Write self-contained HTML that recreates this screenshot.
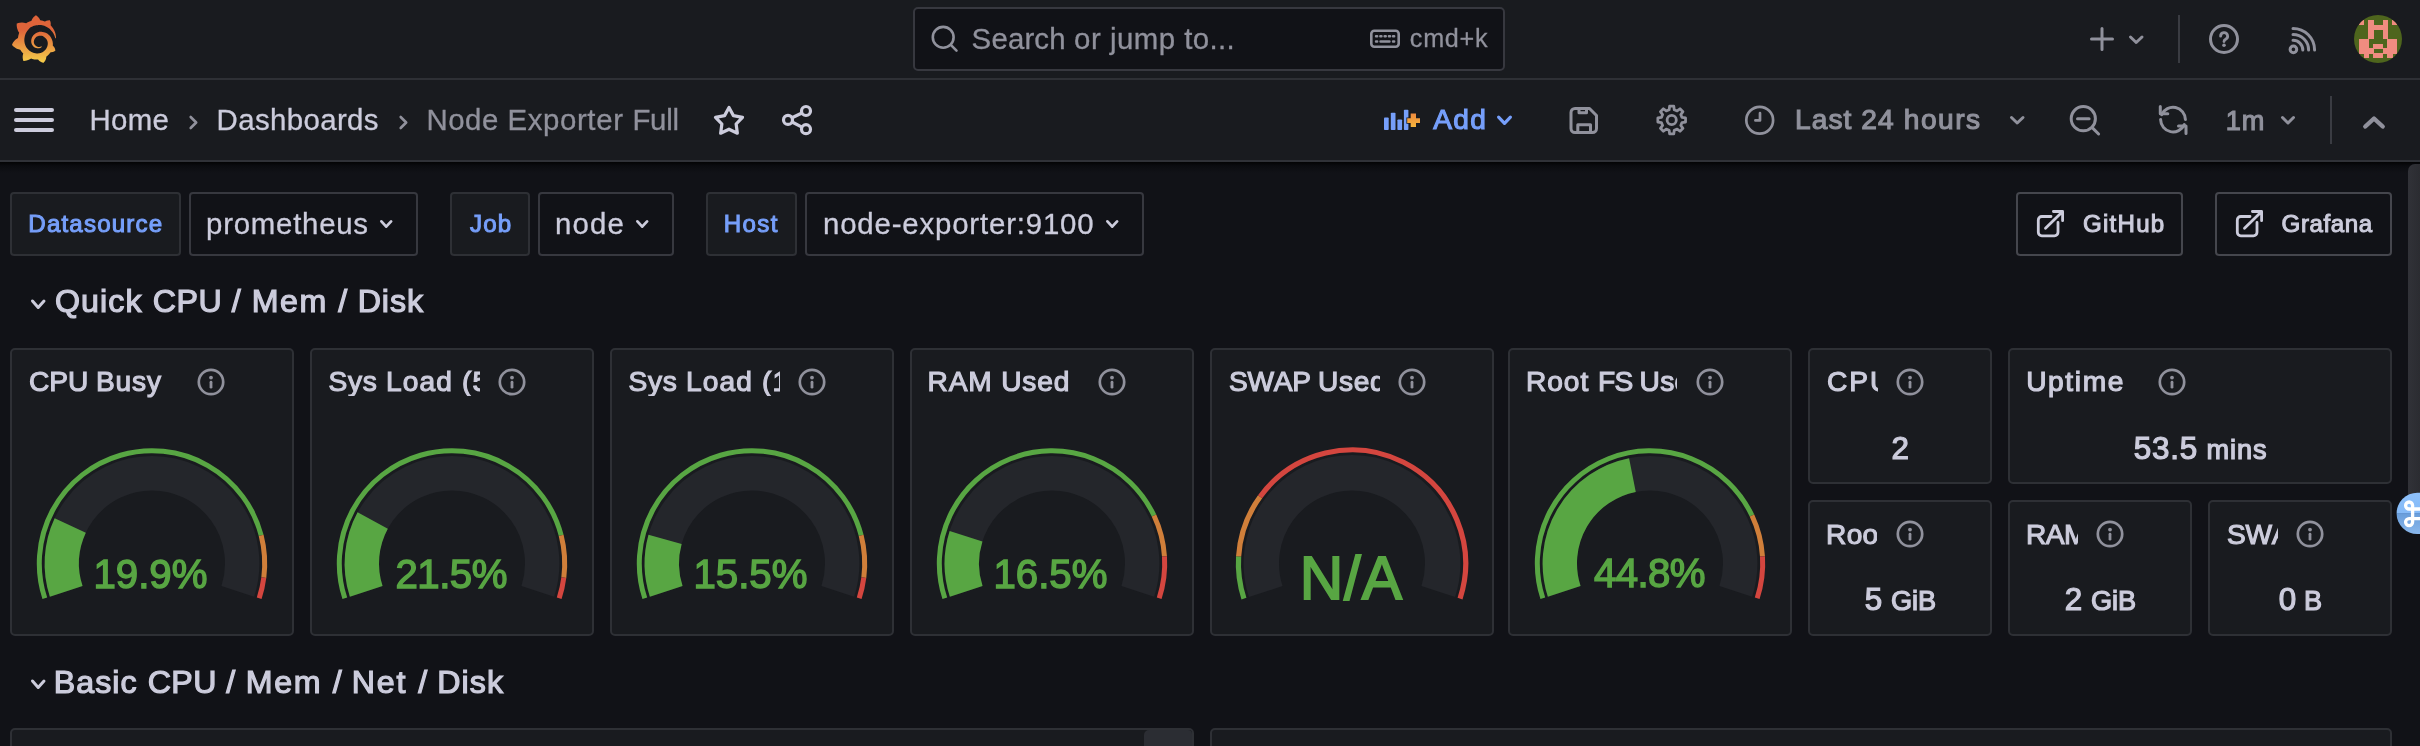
<!DOCTYPE html><html lang="en"><head><meta charset="utf-8"><title>Node Exporter Full - Dashboards - Grafana</title><style>
html,body{margin:0;padding:0;background:#111217;}
body{width:2420px;height:746px;overflow:hidden;background:#111217;font-family:"Liberation Sans", sans-serif;position:relative;}
.b{position:absolute;box-sizing:border-box;}
.t{position:absolute;white-space:pre;line-height:1;font-kerning:none;font-variant-ligatures:none;}
svg{position:absolute;left:0;top:0;}

</style></head><body>
<header>
<div class="b" style="left:0;top:0;width:2420px;height:162px;background:#191b1f;"></div>
<div class="b" style="left:0;top:78px;width:2420px;height:2px;background:#2e3035;"></div>
<div class="b" style="left:0;top:160px;width:2420px;height:2px;background:#303238;"></div>
<div class="b" style="left:0;top:162px;width:2420px;height:11px;background:linear-gradient(#030304,#0b0c10 35%,#111217);"></div>
<div class="b" style="left:913px;top:7px;width:592px;height:64px;background:#111217;border:2px solid #37383f;border-radius:5px;"></div>
</header>
<nav>
<div class="b" style="left:10px;top:192px;width:171px;height:64px;background:#191b1f;border:2px solid #2e3035;border-radius:4px;"></div>
<div class="b" style="left:189px;top:192px;width:229px;height:64px;background:#111217;border:2px solid #37383f;border-radius:4px;"></div>
<div class="b" style="left:450px;top:192px;width:80px;height:64px;background:#191b1f;border:2px solid #2e3035;border-radius:4px;"></div>
<div class="b" style="left:538px;top:192px;width:136px;height:64px;background:#111217;border:2px solid #37383f;border-radius:4px;"></div>
<div class="b" style="left:706px;top:192px;width:91px;height:64px;background:#191b1f;border:2px solid #2e3035;border-radius:4px;"></div>
<div class="b" style="left:805px;top:192px;width:339px;height:64px;background:#111217;border:2px solid #37383f;border-radius:4px;"></div>
<div class="b" style="left:2016px;top:192px;width:167px;height:64px;background:#111217;border:2px solid #45464d;border-radius:4px;"></div>
<div class="b" style="left:2215px;top:192px;width:177px;height:64px;background:#111217;border:2px solid #45464d;border-radius:4px;"></div>
</nav>
<main>
<div class="b" style="left:10px;top:348px;width:284px;height:288px;background:#191b1f;border:2px solid #2e3035;border-radius:5px;"></div>
<div class="b" style="left:310px;top:348px;width:284px;height:288px;background:#191b1f;border:2px solid #2e3035;border-radius:5px;"></div>
<div class="b" style="left:610px;top:348px;width:284px;height:288px;background:#191b1f;border:2px solid #2e3035;border-radius:5px;"></div>
<div class="b" style="left:910px;top:348px;width:284px;height:288px;background:#191b1f;border:2px solid #2e3035;border-radius:5px;"></div>
<div class="b" style="left:1210px;top:348px;width:284px;height:288px;background:#191b1f;border:2px solid #2e3035;border-radius:5px;"></div>
<div class="b" style="left:1508px;top:348px;width:284px;height:288px;background:#191b1f;border:2px solid #2e3035;border-radius:5px;"></div>
<div class="b" style="left:1808px;top:348px;width:184px;height:136px;background:#191b1f;border:2px solid #2e3035;border-radius:5px;"></div>
<div class="b" style="left:2008px;top:348px;width:384px;height:136px;background:#191b1f;border:2px solid #2e3035;border-radius:5px;"></div>
<div class="b" style="left:1808px;top:500px;width:184px;height:136px;background:#191b1f;border:2px solid #2e3035;border-radius:5px;"></div>
<div class="b" style="left:2008px;top:500px;width:184px;height:136px;background:#191b1f;border:2px solid #2e3035;border-radius:5px;"></div>
<div class="b" style="left:2208px;top:500px;width:184px;height:136px;background:#191b1f;border:2px solid #2e3035;border-radius:5px;"></div>
<div class="b" style="left:10px;top:728px;width:1184px;height:72px;background:#191b1f;border:2px solid #2e3035;border-radius:5px;"></div>
<div class="b" style="left:1210px;top:728px;width:1182px;height:72px;background:#191b1f;border:2px solid #2e3035;border-radius:5px;"></div>
<div class="b" style="left:1144px;top:730px;width:48px;height:40px;background:#2b2d33;border-radius:5px 4px 0 0;"></div>
</main>
<div class="b" style="left:2408px;top:164px;width:12px;height:340px;background:linear-gradient(90deg,#313238,#2b2c31);border-radius:7px 0 0 7px;"></div>
<svg width="2420" height="746" viewBox="0 0 2420 746">
<defs><linearGradient id="lg" gradientUnits="userSpaceOnUse" x1="175.5" y1="445.4" x2="175.5" y2="114"><stop offset="0" stop-color="#fdf150"/><stop offset="1" stop-color="#df643a"/></linearGradient></defs><g transform="translate(10.9 15) scale(0.1315)"><path fill="url(#lg)" d="M342,161.200c-0.600-6.100-1.600-13.100-3.600-20.900c-2-7.700-5-16.200-9.400-25c-4.400-8.800-10.100-17.900-17.500-26.800c-2.900-3.500-6.100-6.900-9.500-10.200c5.100-20.300-6.200-37.900-6.200-37.900c-19.500-1.200-31.900,6.100-36.500,9.400c-0.800-0.300-1.500-0.700-2.300-1c-3.300-1.300-6.700-2.600-10.300-3.700c-3.500-1.100-7.100-2.100-10.800-3c-3.700-0.900-7.400-1.600-11.200-2.200c-0.700-0.100-1.300-0.200-2-0.300c-8.500-27.200-32.900-38.600-32.900-38.600c-27.300,17.300-32.400,41.500-32.400,41.500s-0.100,0.500-0.300,1.400c-1.500,0.400-3,0.900-4.500,1.300c-2.100,0.600-4.200,1.400-6.200,2.200c-2.100,0.800-4.100,1.600-6.200,2.500c-4.100,1.800-8.200,3.800-12.200,6c-3.900,2.200-7.700,4.600-11.400,7.100c-0.500-0.200-1-0.400-1-0.400c-37.800-14.400-71.300,2.900-71.300,2.900c-3.100,40.200,15.100,65.500,18.700,70.100c-0.900,2.500-1.700,5-2.500,7.500c-2.800,9.100-4.900,18.400-6.200,28.100c-0.200,1.400-0.400,2.800-0.500,4.200C18.800,192.700,8.500,228,8.500,228c29.100,33.500,63.100,35.600,63.100,35.600c0,0,0.100-0.100,0.100-0.100c4.300,7.700,9.300,15,14.900,21.900c2.400,2.900,4.800,5.600,7.400,8.300c-10.600,30.400,1.500,55.600,1.500,55.600c32.400,1.200,53.700-14.200,58.200-17.700c3.200,1.100,6.500,2.100,9.800,2.900c10,2.600,20.200,4.100,30.400,4.500c2.500,0.100,5.100,0.200,7.600,0.100l1.200,0l0.800,0l1.600,0l1.600-0.100l0,0.100c15.300,21.800,42.100,24.900,42.100,24.900c19.100-20.100,20.200-40.100,20.200-44.400l0,0c0,0,0-0.100,0-0.300c0-0.400,0-0.600,0-0.600l0,0c0-0.300,0-0.600,0-0.900c4-2.800,7.800-5.800,11.400-9.100c7.600-6.900,14.300-14.800,19.900-23.300c0.500-0.800,1-1.600,1.500-2.400c21.600,1.200,36.900-13.400,36.900-13.400c-3.600-22.500-16.400-33.500-19.100-35.600c0,0-0.100-0.100-0.300-0.200c-0.200-0.100-0.200-0.200-0.200-0.200c0,0,0,0,0,0c-0.100-0.100-0.300-0.200-0.500-0.300c0.100-1.400,0.200-2.700,0.300-4.100c0.200-2.400,0.200-4.900,0.200-7.300l0-1.800l0-0.900l0-0.500c0-0.600,0-0.400,0-0.600l-0.100-1.500l-0.100-2c0-0.700-0.100-1.300-0.200-1.900c-0.100-0.600-0.100-1.300-0.200-1.900l-0.200-1.900l-0.300-1.900c-0.400-2.500-0.800-4.900-1.400-7.400c-2.300-9.700-6.100-18.900-11-27.200c-5-8.300-11.200-15.600-18.300-21.800c-7-6.200-14.900-11.200-23.100-14.900c-8.300-3.700-16.900-6.100-25.500-7.200c-4.300-0.600-8.600-0.800-12.900-0.700l-1.600,0l-0.400,0c-0.100,0-0.600,0-0.500,0l-0.700,0l-1.600,0.100c-0.600,0-1.200,0.100-1.700,0.100c-2.200,0.200-4.400,0.500-6.500,0.900c-8.600,1.600-16.700,4.700-23.800,9c-7.100,4.300-13.300,9.600-18.300,15.600c-5,6-8.900,12.700-11.600,19.600c-2.700,6.900-4.200,14.100-4.600,21c-0.100,1.700-0.100,3.500-0.100,5.200c0,0.400,0,0.900,0,1.300l0.100,1.400c0.100,0.800,0.100,1.700,0.200,2.500c0.300,3.500,1,6.900,1.900,10.100c1.900,6.500,4.900,12.400,8.600,17.400c3.700,5,8.200,9.100,12.900,12.400c4.700,3.200,9.800,5.500,14.800,7c5,1.500,10,2.100,14.700,2.100c0.600,0,1.200,0,1.700,0c0.300,0,0.600,0,0.900,0c0.300,0,0.600,0,0.900-0.100c0.500,0,1-0.100,1.500-0.100c0.100,0,0.300,0,0.400-0.100l0.500-0.100c0.300,0,0.600-0.100,0.900-0.100c0.600-0.100,1.100-0.200,1.700-0.300c0.600-0.100,1.100-0.200,1.600-0.400c1.100-0.200,2.100-0.600,3.100-0.900c2-0.700,4-1.500,5.700-2.400c1.800-0.900,3.400-2,5-3c0.400-0.300,0.900-0.600,1.300-1c1.600-1.300,1.900-3.700,0.600-5.300c-1.100-1.400-3.100-1.800-4.700-0.900c-0.400,0.200-0.800,0.400-1.200,0.600c-1.400,0.700-2.800,1.300-4.300,1.800c-1.500,0.500-3.100,0.900-4.700,1.200c-0.800,0.100-1.600,0.200-2.500,0.300c-0.400,0-0.800,0.100-1.300,0.100c-0.400,0-0.900,0-1.200,0c-0.400,0-0.800,0-1.200,0c-0.500,0-1,0-1.500-0.100c0,0-0.300,0-0.100,0l-0.200,0l-0.300,0c-0.200,0-0.500,0-0.700-0.100c-0.500-0.100-0.900-0.100-1.400-0.200c-3.700-0.500-7.400-1.600-10.900-3.200c-3.600-1.600-7-3.800-10.100-6.600c-3.100-2.800-5.800-6.100-7.900-9.900c-2.100-3.800-3.600-8-4.300-12.400c-0.300-2.200-0.500-4.500-0.400-6.700c0-0.600,0.100-1.200,0.100-1.800c0,0.200,0-0.100,0-0.100l0-0.200l0-0.500c0-0.300,0.100-0.600,0.100-0.900c0.100-1.200,0.300-2.400,0.500-3.600c1.700-9.600,6.500-19,13.900-26.100c1.900-1.800,3.900-3.400,6-4.900c2.100-1.500,4.400-2.800,6.800-3.900c2.400-1.100,4.800-2,7.400-2.700c2.500-0.700,5.100-1.100,7.800-1.400c1.300-0.100,2.600-0.200,4-0.200c0.400,0,0.600,0,0.900,0l1.100,0l0.700,0c0.300,0,0,0,0.100,0l0.300,0l1.100,0.100c2.900,0.200,5.700,0.600,8.500,1.300c5.600,1.200,11.100,3.300,16.200,6.100c10.200,5.700,18.900,14.500,24.200,25.100c2.700,5.300,4.600,11,5.500,16.900c0.200,1.500,0.400,3,0.500,4.500l0.100,1.100l0.100,1.100c0,0.400,0,0.800,0,1.100c0,0.400,0,0.800,0,1.100l0,1l0,1.100c0,0.700-0.100,1.900-0.100,2.600c-0.100,1.600-0.300,3.300-0.500,4.900c-0.200,1.600-0.500,3.200-0.800,4.800c-0.300,1.600-0.700,3.200-1.100,4.700c-0.800,3.100-1.800,6.200-3,9.300c-2.400,6-5.600,11.800-9.400,17.100c-7.700,10.600-18.200,19.200-30.200,24.700c-6,2.700-12.300,4.700-18.800,5.700c-3.200,0.600-6.500,0.900-9.800,1l-0.600,0l-0.500,0l-1.100,0l-1.600,0l-0.800,0c0.400,0-0.100,0-0.100,0l-0.300,0c-1.800,0-3.500-0.100-5.300-0.300c-7-0.500-13.900-1.800-20.700-3.700c-6.700-1.900-13.200-4.600-19.400-7.800c-12.300-6.600-23.400-15.600-32-26.500c-4.300-5.400-8.100-11.300-11.200-17.400c-3.100-6.100-5.600-12.600-7.400-19.100c-1.800-6.600-2.900-13.300-3.400-20.100l-0.100-1.300l0-0.300l0-0.300l0-0.600l0-1.100l0-0.300l0-0.400l0-0.800l0-1.600l0-0.300c0,0,0,0.100,0-0.100l0-0.600c0-0.800,0-1.700,0-2.500c0.100-3.300,0.400-6.800,0.800-10.200c0.400-3.400,1-6.900,1.700-10.300c0.700-3.400,1.500-6.800,2.500-10.200c1.900-6.700,4.300-13.200,7.100-19.300c5.700-12.200,13.100-23.100,22-31.800c2.200-2.200,4.500-4.200,6.900-6.200c2.400-1.900,4.900-3.700,7.500-5.400c2.500-1.700,5.200-3.200,7.900-4.600c1.300-0.700,2.700-1.400,4.100-2c0.700-0.300,1.400-0.600,2.100-0.900c0.700-0.300,1.400-0.600,2.100-0.900c2.800-1.200,5.700-2.200,8.700-3.100c0.700-0.200,1.500-0.400,2.200-0.700c0.700-0.200,1.500-0.400,2.200-0.600c1.500-0.400,3-0.800,4.500-1.100c0.700-0.200,1.500-0.300,2.300-0.500c0.800-0.200,1.500-0.300,2.300-0.500c0.800-0.100,1.500-0.300,2.300-0.400l1.100-0.200l1.200-0.200c0.800-0.100,1.500-0.200,2.300-0.300c0.900-0.100,1.700-0.200,2.600-0.300c0.700-0.100,1.900-0.200,2.600-0.300c0.500-0.100,1.100-0.100,1.600-0.200l1.100-0.100l0.500-0.100l0.600,0c0.900-0.100,1.700-0.100,2.600-0.200l1.300-0.100c0,0,0.500,0,0.100,0l0.300,0l0.600,0c0.700,0,1.500-0.100,2.200-0.100c2.900-0.100,5.900-0.100,8.800,0c5.800,0.200,11.500,0.900,17,1.900c11.100,2.100,21.500,5.600,31,10.300c9.500,4.600,17.900,10.300,25.300,16.500c0.500,0.400,0.900,0.800,1.400,1.200c0.400,0.400,0.900,0.800,1.300,1.200c0.900,0.800,1.700,1.600,2.600,2.400c0.900,0.800,1.700,1.600,2.500,2.400c0.800,0.800,1.600,1.600,2.400,2.500c3.100,3.300,6,6.600,8.600,10c5.200,6.700,9.400,13.500,12.700,19.900c0.200,0.400,0.400,0.800,0.600,1.200c0.200,0.400,0.400,0.800,0.600,1.200c0.400,0.800,0.800,1.600,1.100,2.400c0.400,0.800,0.700,1.500,1.100,2.300c0.300,0.800,0.700,1.500,1,2.300c1.200,3,2.400,5.900,3.300,8.600c1.500,4.400,2.600,8.300,3.500,11.700c0.300,1.400,1.600,2.300,3,2.100c1.500-0.100,2.600-1.300,2.600-2.800C342.600,170.400,342.500,166.100,342,161.200z"/></g>
<rect x="14" y="108" width="40" height="4" rx="2" fill="#ccccdc"/>
<rect x="14" y="118" width="40" height="4" rx="2" fill="#ccccdc"/>
<rect x="14" y="128" width="40" height="4" rx="2" fill="#ccccdc"/>
<path d="M190.7 117L196.2 122.500L190.7 128" stroke="#90919c" stroke-width="2.600" fill="none" stroke-linecap="round" stroke-linejoin="round"/>
<path d="M400.7 117L406.2 122.500L400.7 128" stroke="#90919c" stroke-width="2.600" fill="none" stroke-linecap="round" stroke-linejoin="round"/>
<path d="M729.00 107.50L733.41 115.63L742.51 117.31L736.13 124.02L737.35 133.19L729.00 129.20L720.65 133.19L721.87 124.02L715.49 117.31L724.59 115.63Z" stroke="#ccccdc" stroke-width="3.2" fill="none" stroke-linejoin="round"/>
<g stroke="#ccccdc" stroke-width="3.2" fill="none"><circle cx="806" cy="111" r="4.500"/><circle cx="788" cy="119.900" r="4.500"/><circle cx="806" cy="129.200" r="4.500"/><path d="M792.100 117.800L801.900 113M792.100 122L801.900 127.100"/></g>
<g stroke="#90919c" stroke-width="2.600" fill="none" stroke-linecap="round"><circle cx="943.200" cy="37.300" r="10.400"/><path d="M950.800 44.900L956.500 50.600"/></g>
<g stroke="#90919c" fill="none"><rect x="1371.3" y="30.8" width="27.4" height="16" rx="3" stroke-width="2.6"/><path d="M1376 36.3h1.2M1380.3 36.3h1.2M1384.6 36.3h1.2M1388.9 36.3h1.2M1393 36.3h1.2M1376 41.5h1.2M1380.5 41.5h9M1393 41.5h1.2" stroke-width="2.4" stroke-linecap="round"/></g>
<g fill="#769ffa"><rect x="1384" y="117.5" width="4.7" height="12.5" rx="0.8"/><rect x="1390.8" y="112.7" width="4.7" height="17.3" rx="0.8"/><rect x="1397.4" y="119.5" width="4.7" height="10.5" rx="0.8"/><rect x="1403.9" y="109.7" width="4.5" height="20.3" rx="0.8"/></g>
<defs><linearGradient id="og" x1="0" y1="0" x2="0" y2="1"><stop offset="0" stop-color="#ef8a3e"/><stop offset="1" stop-color="#f5b53d"/></linearGradient></defs>
<path d="M1410.7 113.400h5.300v4.800h4v4.800h-4v4h-5.300v-4h-3.500v-4.800h3.500z" fill="url(#og)" stroke="#191b1f" stroke-width="1.6" paint-order="stroke"/>
<path d="M1498.6 117.1L1504.5 123.4L1510.4 117.1" stroke="#769ffa" stroke-width="3.2" fill="none" stroke-linecap="round" stroke-linejoin="round"/>
<g stroke="#90919c" stroke-width="3" fill="none" stroke-linejoin="round"><path d="M1575 108.5h14.5l7 7v13a4 4 0 0 1 -4 4h-17.500a4 4 0 0 1 -4 -4v-16a4 4 0 0 1 4 -4z"/><path d="M1579 108.500v4.300h7.500v-4.300M1577.800 132v-7.300h12.700v7.300"/></g>
<g stroke="#90919c" stroke-width="2.8" fill="none" stroke-linejoin="round"><path d="M1669.62 106.16L1673.78 106.16L1674.26 109.71L1677.17 110.92L1680.02 108.74L1682.96 111.68L1680.78 114.53L1681.99 117.44L1685.54 117.92L1685.54 122.08L1681.99 122.56L1680.78 125.47L1682.96 128.32L1680.02 131.26L1677.17 129.08L1674.26 130.29L1673.78 133.84L1669.62 133.84L1669.14 130.29L1666.23 129.08L1663.38 131.26L1660.44 128.32L1662.62 125.47L1661.41 122.56L1657.86 122.08L1657.86 117.92L1661.41 117.44L1662.62 114.53L1660.44 111.68L1663.38 108.74L1666.23 110.92L1669.14 109.71Z"/><circle cx="1671.7" cy="120" r="4.6"/></g>
<g stroke="#90919c" stroke-width="2.700" fill="none" stroke-linecap="round" stroke-linejoin="round"><circle cx="1759.700" cy="120.200" r="13.400"/><path d="M1760 113.200v7.200h-4.600"/></g>
<path d="M2011.5 117.5L2017.2 123.0L2023.0 117.5" stroke="#90919c" stroke-width="3" fill="none" stroke-linecap="round" stroke-linejoin="round"/>
<g stroke="#90919c" stroke-width="3" fill="none" stroke-linecap="round"><circle cx="2083.300" cy="118.700" r="12.100"/><path d="M2077.500 118.700h11.600M2092.200 127.600L2098.600 134"/></g>
<g stroke="#90919c" stroke-width="3" fill="none" stroke-linecap="round" stroke-linejoin="round"><path d="M2161.700 114.600A12.400 12.400 0 0 1 2185.400 119.600M2184.300 124.600A12.400 12.400 0 0 1 2160.600 119.600"/><path d="M2160.300 106.500v7.300h7.500M2186 133.500v-7.500h-7.500"/></g>
<path d="M2282.5 117.5L2288.0 123.0L2293.5 117.5" stroke="#90919c" stroke-width="3" fill="none" stroke-linecap="round" stroke-linejoin="round"/>
<rect x="2330" y="96" width="2" height="48" fill="#3a3c42"/>
<path d="M2365.300 126.500L2374 118.500L2382.700 126.500" stroke="#90919c" stroke-width="4.4" fill="none" stroke-linecap="round" stroke-linejoin="round"/>
<path d="M2102 28.500v21M2091.500 39h21" stroke="#90919c" stroke-width="3" fill="none" stroke-linecap="round"/>
<path d="M2130.5 37.0L2136.2 42.5L2142.0 37.0" stroke="#90919c" stroke-width="3" fill="none" stroke-linecap="round" stroke-linejoin="round"/>
<rect x="2178" y="15" width="2" height="48" fill="#3a3c42"/>
<g stroke="#90919c" fill="none" stroke-linecap="round"><circle cx="2224" cy="39" r="13.5" stroke-width="3"/><path d="M2220.600 36.200a3.500 3.500 0 1 1 4.900 3.200c-1.100 0.500 -1.500 1.100 -1.500 2.200" stroke-width="2.800"/></g><circle cx="2224" cy="45.300" r="1.800" fill="#90919c"/>
<g stroke="#90919c" stroke-width="3" fill="none" stroke-linecap="round"><circle cx="2293.400" cy="49.400" r="3.300"/><path d="M2293 40.200a9.800 9.800 0 0 1 9.800 9.800M2293 34.400a15.600 15.600 0 0 1 15.600 15.600M2293 28.400a21.600 21.600 0 0 1 21.600 21.600"/></g>
<clipPath id="avc"><circle cx="2378" cy="39" r="24"/></clipPath><g clip-path="url(#avc)"><rect x="2354" y="15" width="48" height="48" fill="#4e651d"/><rect x="2358.75" y="19.75" width="5.27" height="5.27" fill="#f08c80" shape-rendering="crispEdges"/><rect x="2368.29" y="19.75" width="5.27" height="5.27" fill="#f08c80" shape-rendering="crispEdges"/><rect x="2382.60" y="19.75" width="5.27" height="5.27" fill="#f08c80" shape-rendering="crispEdges"/><rect x="2392.14" y="19.75" width="5.27" height="5.27" fill="#f08c80" shape-rendering="crispEdges"/><rect x="2368.29" y="24.52" width="5.27" height="5.27" fill="#f08c80" shape-rendering="crispEdges"/><rect x="2373.06" y="24.52" width="5.27" height="5.27" fill="#f08c80" shape-rendering="crispEdges"/><rect x="2377.83" y="24.52" width="5.27" height="5.27" fill="#f08c80" shape-rendering="crispEdges"/><rect x="2382.60" y="24.52" width="5.27" height="5.27" fill="#f08c80" shape-rendering="crispEdges"/><rect x="2368.29" y="29.29" width="5.27" height="5.27" fill="#f08c80" shape-rendering="crispEdges"/><rect x="2382.60" y="29.29" width="5.27" height="5.27" fill="#f08c80" shape-rendering="crispEdges"/><rect x="2368.29" y="34.06" width="5.27" height="5.27" fill="#f08c80" shape-rendering="crispEdges"/><rect x="2382.60" y="34.06" width="5.27" height="5.27" fill="#f08c80" shape-rendering="crispEdges"/><rect x="2358.75" y="38.83" width="5.27" height="5.27" fill="#f08c80" shape-rendering="crispEdges"/><rect x="2363.52" y="38.83" width="5.27" height="5.27" fill="#f08c80" shape-rendering="crispEdges"/><rect x="2387.37" y="38.83" width="5.27" height="5.27" fill="#f08c80" shape-rendering="crispEdges"/><rect x="2392.14" y="38.83" width="5.27" height="5.27" fill="#f08c80" shape-rendering="crispEdges"/><rect x="2358.75" y="43.60" width="5.27" height="5.27" fill="#f08c80" shape-rendering="crispEdges"/><rect x="2363.52" y="43.60" width="5.27" height="5.27" fill="#f08c80" shape-rendering="crispEdges"/><rect x="2373.06" y="43.60" width="5.27" height="5.27" fill="#f08c80" shape-rendering="crispEdges"/><rect x="2377.83" y="43.60" width="5.27" height="5.27" fill="#f08c80" shape-rendering="crispEdges"/><rect x="2387.37" y="43.60" width="5.27" height="5.27" fill="#f08c80" shape-rendering="crispEdges"/><rect x="2392.14" y="43.60" width="5.27" height="5.27" fill="#f08c80" shape-rendering="crispEdges"/><rect x="2358.75" y="48.37" width="5.27" height="5.27" fill="#f08c80" shape-rendering="crispEdges"/><rect x="2363.52" y="48.37" width="5.27" height="5.27" fill="#f08c80" shape-rendering="crispEdges"/><rect x="2368.29" y="48.37" width="5.27" height="5.27" fill="#f08c80" shape-rendering="crispEdges"/><rect x="2382.60" y="48.37" width="5.27" height="5.27" fill="#f08c80" shape-rendering="crispEdges"/><rect x="2387.37" y="48.37" width="5.27" height="5.27" fill="#f08c80" shape-rendering="crispEdges"/><rect x="2392.14" y="48.37" width="5.27" height="5.27" fill="#f08c80" shape-rendering="crispEdges"/><rect x="2363.52" y="53.14" width="5.27" height="5.27" fill="#f08c80" shape-rendering="crispEdges"/><rect x="2373.06" y="53.14" width="5.27" height="5.27" fill="#f08c80" shape-rendering="crispEdges"/><rect x="2377.83" y="53.14" width="5.27" height="5.27" fill="#f08c80" shape-rendering="crispEdges"/><rect x="2387.37" y="53.14" width="5.27" height="5.27" fill="#f08c80" shape-rendering="crispEdges"/></g>
<path d="M381.4 221.4L386.2 226.6L391.1 221.4" stroke="#ccccdc" stroke-width="2.8" fill="none" stroke-linecap="round" stroke-linejoin="round"/>
<path d="M637.4 221.4L642.2 226.6L647.1 221.4" stroke="#ccccdc" stroke-width="2.8" fill="none" stroke-linecap="round" stroke-linejoin="round"/>
<path d="M1107.4 221.4L1112.2 226.6L1117.1 221.4" stroke="#ccccdc" stroke-width="2.8" fill="none" stroke-linecap="round" stroke-linejoin="round"/>
<g stroke="#ccccdc" stroke-width="2.8" fill="none" stroke-linecap="round" stroke-linejoin="round"><path d="M2051 216.500H2041.8a3.500 3.500 0 0 0 -3.500 3.500V232.300a3.500 3.500 0 0 0 3.500 3.500H2054.5a3.500 3.500 0 0 0 3.500 -3.500V222.500"/><path d="M2045.5 228.300L2062.4 211.700M2053.4 211.500H2062.6V220.700"/></g>
<g stroke="#ccccdc" stroke-width="2.8" fill="none" stroke-linecap="round" stroke-linejoin="round"><path d="M2250 216.500H2240.8a3.500 3.500 0 0 0 -3.500 3.500V232.300a3.500 3.500 0 0 0 3.500 3.500H2253.5a3.500 3.500 0 0 0 3.500 -3.500V222.500"/><path d="M2244.5 228.300L2261.4 211.700M2252.4 211.500H2261.6V220.700"/></g>
<path d="M32.5 301.0L38.2 307.5L44.0 301.0" stroke="#ccccdc" stroke-width="3" fill="none" stroke-linecap="round" stroke-linejoin="round"/>
<path d="M32.5 681.0L38.2 687.5L44.0 681.0" stroke="#ccccdc" stroke-width="3" fill="none" stroke-linecap="round" stroke-linejoin="round"/>
<path d="M66.21 591.37A90.2 90.2 0 1 1 237.79 591.37" stroke="#24262b" stroke-width="34.400000000000006" fill="none"/><path d="M66.21 591.37A90.2 90.2 0 0 1 70.24 525.40" stroke="#58a643" stroke-width="34.400000000000006" fill="none"/><path d="M44.82 598.33A112.7 112.7 0 1 1 261.16 535.47" stroke="#58a643" stroke-width="5" fill="none"/><path d="M261.16 535.47A112.7 112.7 0 0 1 263.81 577.63" stroke="#d07f3a" stroke-width="5" fill="none"/><path d="M263.81 577.63A112.7 112.7 0 0 1 259.18 598.33" stroke="#d4463f" stroke-width="5" fill="none"/>
<path d="M366.21 591.37A90.2 90.2 0 1 1 537.79 591.37" stroke="#24262b" stroke-width="34.400000000000006" fill="none"/><path d="M366.21 591.37A90.2 90.2 0 0 1 372.69 520.54" stroke="#58a643" stroke-width="34.400000000000006" fill="none"/><path d="M344.82 598.33A112.7 112.7 0 1 1 561.16 535.47" stroke="#58a643" stroke-width="5" fill="none"/><path d="M561.16 535.47A112.7 112.7 0 0 1 563.81 577.63" stroke="#d07f3a" stroke-width="5" fill="none"/><path d="M563.81 577.63A112.7 112.7 0 0 1 559.18 598.33" stroke="#d4463f" stroke-width="5" fill="none"/>
<path d="M666.21 591.37A90.2 90.2 0 1 1 837.79 591.37" stroke="#24262b" stroke-width="34.400000000000006" fill="none"/><path d="M666.21 591.37A90.2 90.2 0 0 1 665.07 539.43" stroke="#58a643" stroke-width="34.400000000000006" fill="none"/><path d="M644.82 598.33A112.7 112.7 0 1 1 861.16 535.47" stroke="#58a643" stroke-width="5" fill="none"/><path d="M861.16 535.47A112.7 112.7 0 0 1 863.81 577.63" stroke="#d07f3a" stroke-width="5" fill="none"/><path d="M863.81 577.63A112.7 112.7 0 0 1 859.18 598.33" stroke="#d4463f" stroke-width="5" fill="none"/>
<path d="M966.21 591.37A90.2 90.2 0 1 1 1137.79 591.37" stroke="#24262b" stroke-width="34.400000000000006" fill="none"/><path d="M966.21 591.37A90.2 90.2 0 0 1 966.04 536.17" stroke="#58a643" stroke-width="34.400000000000006" fill="none"/><path d="M944.82 598.33A112.7 112.7 0 0 1 1153.97 515.51" stroke="#58a643" stroke-width="5" fill="none"/><path d="M1153.97 515.51A112.7 112.7 0 0 1 1164.48 556.42" stroke="#d07f3a" stroke-width="5" fill="none"/><path d="M1164.48 556.42A112.7 112.7 0 0 1 1159.18 598.33" stroke="#d4463f" stroke-width="5" fill="none"/>
<path d="M1265.74 591.53A90.7 90.7 0 1 1 1438.26 591.53" stroke="#24262b" stroke-width="35.400000000000006" fill="none"/><path d="M1243.96 598.60A113.6 113.6 0 0 1 1238.62 556.37" stroke="#58a643" stroke-width="5.2" fill="none"/><path d="M1238.62 556.37A113.6 113.6 0 0 1 1260.10 496.73" stroke="#d07f3a" stroke-width="5.2" fill="none"/><path d="M1260.10 496.73A113.6 113.6 0 0 1 1460.04 598.60" stroke="#d4463f" stroke-width="5.2" fill="none"/>
<path d="M1564.21 591.37A90.2 90.2 0 1 1 1735.79 591.37" stroke="#24262b" stroke-width="34.400000000000006" fill="none"/><path d="M1564.21 591.37A90.2 90.2 0 0 1 1632.43 475.03" stroke="#58a643" stroke-width="34.400000000000006" fill="none"/><path d="M1542.82 598.33A112.7 112.7 0 0 1 1751.97 515.51" stroke="#58a643" stroke-width="5" fill="none"/><path d="M1751.97 515.51A112.7 112.7 0 0 1 1762.48 556.42" stroke="#d07f3a" stroke-width="5" fill="none"/><path d="M1762.48 556.42A112.7 112.7 0 0 1 1757.18 598.33" stroke="#d4463f" stroke-width="5" fill="none"/>
<g stroke="#90919c" fill="none" stroke-width="2.700"><circle cx="211" cy="382" r="12.200"/><path d="M211 382.2v5" stroke-linecap="round" stroke-width="2.800"/></g><circle cx="211" cy="377.6" r="1.900" fill="#90919c"/>
<g stroke="#90919c" fill="none" stroke-width="2.700"><circle cx="512" cy="382" r="12.200"/><path d="M512 382.2v5" stroke-linecap="round" stroke-width="2.800"/></g><circle cx="512" cy="377.6" r="1.900" fill="#90919c"/>
<g stroke="#90919c" fill="none" stroke-width="2.700"><circle cx="812" cy="382" r="12.200"/><path d="M812 382.2v5" stroke-linecap="round" stroke-width="2.800"/></g><circle cx="812" cy="377.6" r="1.900" fill="#90919c"/>
<g stroke="#90919c" fill="none" stroke-width="2.700"><circle cx="1112" cy="382" r="12.200"/><path d="M1112 382.2v5" stroke-linecap="round" stroke-width="2.800"/></g><circle cx="1112" cy="377.6" r="1.900" fill="#90919c"/>
<g stroke="#90919c" fill="none" stroke-width="2.700"><circle cx="1412" cy="382" r="12.200"/><path d="M1412 382.2v5" stroke-linecap="round" stroke-width="2.800"/></g><circle cx="1412" cy="377.6" r="1.900" fill="#90919c"/>
<g stroke="#90919c" fill="none" stroke-width="2.700"><circle cx="1710" cy="382" r="12.200"/><path d="M1710 382.2v5" stroke-linecap="round" stroke-width="2.800"/></g><circle cx="1710" cy="377.6" r="1.900" fill="#90919c"/>
<g stroke="#90919c" fill="none" stroke-width="2.700"><circle cx="1910" cy="382" r="12.200"/><path d="M1910 382.2v5" stroke-linecap="round" stroke-width="2.800"/></g><circle cx="1910" cy="377.6" r="1.900" fill="#90919c"/>
<g stroke="#90919c" fill="none" stroke-width="2.700"><circle cx="2172" cy="382" r="12.200"/><path d="M2172 382.2v5" stroke-linecap="round" stroke-width="2.800"/></g><circle cx="2172" cy="377.6" r="1.900" fill="#90919c"/>
<g stroke="#90919c" fill="none" stroke-width="2.700"><circle cx="1910" cy="534" r="12.200"/><path d="M1910 534.2v5" stroke-linecap="round" stroke-width="2.800"/></g><circle cx="1910" cy="529.6" r="1.900" fill="#90919c"/>
<g stroke="#90919c" fill="none" stroke-width="2.700"><circle cx="2110" cy="534" r="12.200"/><path d="M2110 534.2v5" stroke-linecap="round" stroke-width="2.800"/></g><circle cx="2110" cy="529.6" r="1.900" fill="#90919c"/>
<g stroke="#90919c" fill="none" stroke-width="2.700"><circle cx="2310" cy="534" r="12.200"/><path d="M2310 534.2v5" stroke-linecap="round" stroke-width="2.800"/></g><circle cx="2310" cy="529.6" r="1.900" fill="#90919c"/>
<defs><linearGradient id="cg" x1="0" y1="0" x2="0" y2="1"><stop offset="0" stop-color="#8ec1fb"/><stop offset="0.495" stop-color="#85baf7"/><stop offset="0.495" stop-color="#6395d2"/><stop offset="0.52" stop-color="#6a9edb"/><stop offset="1" stop-color="#8ab8ec"/></linearGradient></defs>
<circle cx="2417.300" cy="513.400" r="20.700" fill="url(#cg)"/>
<g stroke="#fff" stroke-width="3.300" fill="none"><path d="M2412.600 509v9.600h9.600v-9.600zM2412.600 509h-3.500a3.500 3.500 0 1 1 3.500 -3.500zM2412.600 518.600h-3.500a3.500 3.500 0 1 0 3.500 3.500zM2422 509h3M2422 518.600h3"/></g>
</svg>
<div id="labels" style="position:absolute;left:0;top:0;width:2420px;height:746px;will-change:transform;">
<div class="t" id="t_home" style="left:89.54px;top:105.11px;font-size:29.40px;color:#ccccdc;-webkit-text-stroke:0.31px #ccccdc;"><span style="letter-spacing:0.296px;">Home</span></div>
<div class="t" id="t_dash" style="left:216.54px;top:105.11px;font-size:29.40px;color:#ccccdc;-webkit-text-stroke:0.31px #ccccdc;"><span style="letter-spacing:0.393px;">Dashboards</span></div>
<div class="t" id="t_node" style="left:426.54px;top:105.11px;font-size:29.40px;color:#90919c;-webkit-text-stroke:0.31px #90919c;"><span style="letter-spacing:0.489px;">Node </span><span style="letter-spacing:0.636px;">Exporter </span><span style="letter-spacing:-0.267px;">Full</span></div>
<div class="t" id="t_search" style="left:971.62px;top:24.11px;font-size:29.40px;color:#90919c;-webkit-text-stroke:0.31px #90919c;"><span style="letter-spacing:0.169px;">Search </span><span style="letter-spacing:0.511px;">or jump </span><span style="letter-spacing:0.325px;">to...</span></div>
<div class="t" id="t_cmdk" style="left:1409.87px;top:25.67px;font-size:25.20px;color:#90919c;-webkit-text-stroke:0.28px #90919c;"><span style="letter-spacing:0.682px;">cmd+k</span></div>
<div class="t" id="t_add" style="left:1433.31px;top:106.18px;font-size:28.14px;color:#769ffa;-webkit-text-stroke:1.13px #769ffa;"><span style="letter-spacing:1.287px;">Add</span></div>
<div class="t" id="t_last" style="left:1795.05px;top:106.18px;font-size:28.14px;color:#90919c;-webkit-text-stroke:1.13px #90919c;"><span style="letter-spacing:1.057px;">Last </span><span style="letter-spacing:1.115px;">24 </span><span style="letter-spacing:1.488px;">hours</span></div>
<div class="t" id="t_1m" style="left:2225.78px;top:107.03px;font-size:27.13px;color:#90919c;-webkit-text-stroke:1.10px #90919c;"><span style="letter-spacing:0.960px;">1m</span></div>
<div class="t" id="t_ds" style="left:28.34px;top:211.58px;font-size:24.12px;color:#769ffa;-webkit-text-stroke:1.03px #769ffa;"><span style="letter-spacing:1.175px;">Datasource</span></div>
<div class="t" id="t_prom" style="left:206.06px;top:209.11px;font-size:29.40px;color:#ccccdc;-webkit-text-stroke:0.31px #ccccdc;"><span style="letter-spacing:0.755px;">prometheus</span></div>
<div class="t" id="t_job" style="left:469.94px;top:211.58px;font-size:24.12px;color:#769ffa;-webkit-text-stroke:1.03px #769ffa;"><span style="letter-spacing:1.186px;">Job</span></div>
<div class="t" id="t_nodev" style="left:555.00px;top:209.11px;font-size:29.40px;color:#ccccdc;-webkit-text-stroke:0.31px #ccccdc;"><span style="letter-spacing:1.150px;">node</span></div>
<div class="t" id="t_host" style="left:723.84px;top:211.58px;font-size:24.12px;color:#769ffa;-webkit-text-stroke:1.03px #769ffa;"><span style="letter-spacing:1.311px;">Host</span></div>
<div class="t" id="t_hostv" style="left:823.00px;top:209.11px;font-size:29.40px;color:#ccccdc;-webkit-text-stroke:0.31px #ccccdc;"><span style="letter-spacing:0.828px;">node-exporter:9100</span></div>
<div class="t" id="t_gh" style="left:2083.10px;top:212.08px;font-size:24.12px;color:#ccccdc;-webkit-text-stroke:1.03px #ccccdc;"><span style="letter-spacing:1.206px;">GitHub</span></div>
<div class="t" id="t_gr" style="left:2281.60px;top:212.08px;font-size:24.12px;color:#ccccdc;-webkit-text-stroke:1.03px #ccccdc;"><span style="letter-spacing:0.572px;">Grafana</span></div>
<div class="t" id="t_row1" style="left:54.89px;top:285.28px;font-size:32.16px;color:#ccccdc;-webkit-text-stroke:1.22px #ccccdc;"><span style="letter-spacing:1.108px;">Quick </span><span style="letter-spacing:0.574px;">CPU </span><span style="letter-spacing:0.996px;">/ </span><span style="letter-spacing:1.560px;">Mem </span><span style="letter-spacing:0.746px;">/ </span><span style="letter-spacing:0.946px;">Disk</span></div>
<div class="t" id="t_row2" style="left:53.77px;top:665.78px;font-size:32.16px;color:#ccccdc;-webkit-text-stroke:1.22px #ccccdc;"><span style="letter-spacing:1.055px;">Basic </span><span style="letter-spacing:0.449px;">CPU </span><span style="letter-spacing:0.746px;">/ </span><span style="letter-spacing:1.685px;">Mem </span><span style="letter-spacing:0.496px;">/ </span><span style="letter-spacing:1.914px;">Net </span><span style="letter-spacing:0.496px;">/ </span><span style="letter-spacing:1.113px;">Disk</span></div>
<div class="t" id="p_cpu" style="left:28.93px;top:368.18px;font-size:28.14px;color:#ccccdc;-webkit-text-stroke:1.13px #ccccdc;"><span style="letter-spacing:-0.053px;">CPU </span><span style="letter-spacing:0.893px;">Busy</span></div>
<div class="t" id="p_sl5" style="left:328.58px;top:368.18px;font-size:28.14px;color:#ccccdc;-webkit-text-stroke:1.13px #ccccdc;width:151.42px;overflow:hidden;"><span style="letter-spacing:0.661px;">Sys </span><span style="letter-spacing:1.129px;">Load (5m avg)</span></div>
<div class="t" id="p_sl15" style="left:628.58px;top:368.18px;font-size:28.14px;color:#ccccdc;-webkit-text-stroke:1.13px #ccccdc;width:151.42px;overflow:hidden;"><span style="letter-spacing:0.661px;">Sys </span><span style="letter-spacing:1.129px;">Load (15m avg)</span></div>
<div class="t" id="p_ram" style="left:927.55px;top:368.18px;font-size:28.14px;color:#ccccdc;-webkit-text-stroke:1.13px #ccccdc;"><span style="letter-spacing:0.836px;">RAM Used</span></div>
<div class="t" id="p_swap" style="left:1229.08px;top:368.18px;font-size:28.14px;color:#ccccdc;-webkit-text-stroke:1.13px #ccccdc;width:150.92px;overflow:hidden;"><span style="letter-spacing:-0.336px;">SWAP </span><span style="letter-spacing:0.649px;">Used</span></div>
<div class="t" id="p_root" style="left:1526.05px;top:368.18px;font-size:28.14px;color:#ccccdc;-webkit-text-stroke:1.13px #ccccdc;width:151.45px;overflow:hidden;"><span style="letter-spacing:0.928px;">Root </span><span style="letter-spacing:-0.713px;">FS </span><span style="letter-spacing:0.292px;">Used</span></div>
<div class="t" id="p_cores" style="left:1826.93px;top:368.18px;font-size:28.14px;color:#ccccdc;-webkit-text-stroke:1.13px #ccccdc;width:51.07px;overflow:hidden;"><span style="letter-spacing:2.034px;">CPU Cores</span></div>
<div class="t" id="p_up" style="left:2026.19px;top:368.18px;font-size:28.14px;color:#ccccdc;-webkit-text-stroke:1.13px #ccccdc;"><span style="letter-spacing:1.613px;">Uptime</span></div>
<div class="t" id="p_rt" style="left:1826.05px;top:520.68px;font-size:28.14px;color:#ccccdc;-webkit-text-stroke:1.13px #ccccdc;width:51.25px;overflow:hidden;"><span style="letter-spacing:0.277px;">RootFS Total</span></div>
<div class="t" id="p_rat" style="left:2026.05px;top:520.68px;font-size:28.14px;color:#ccccdc;-webkit-text-stroke:1.13px #ccccdc;width:51.95px;overflow:hidden;"><span style="letter-spacing:-0.595px;">RAM Total</span></div>
<div class="t" id="p_swt" style="left:2227.08px;top:520.68px;font-size:28.14px;color:#ccccdc;-webkit-text-stroke:1.13px #ccccdc;width:50.92px;overflow:hidden;"><span style="letter-spacing:-0.353px;">SWAP Total</span></div>
<div class="t" id="g1" style="left:93.45px;top:554.97px;font-size:40.20px;color:#58a643;-webkit-text-stroke:1.41px #58a643;"><span style="letter-spacing:-0.001px;">19.9%</span></div>
<div class="t" id="g2" style="left:395.49px;top:554.97px;font-size:40.20px;color:#58a643;-webkit-text-stroke:1.41px #58a643;"><span style="letter-spacing:-0.511px;">21.5%</span></div>
<div class="t" id="g3" style="left:693.45px;top:554.97px;font-size:40.20px;color:#58a643;-webkit-text-stroke:1.41px #58a643;"><span style="letter-spacing:-0.001px;">15.5%</span></div>
<div class="t" id="g4" style="left:993.45px;top:554.97px;font-size:40.20px;color:#58a643;-webkit-text-stroke:1.41px #58a643;"><span style="letter-spacing:-0.001px;">16.5%</span></div>
<div class="t" id="g5" style="left:1299.80px;top:548.16px;font-size:60.30px;color:#58a643;-webkit-text-stroke:1.90px #58a643;"><span style="letter-spacing:0.774px;">N/A</span></div>
<div class="t" id="g6" style="left:1594.08px;top:554.47px;font-size:40.20px;color:#58a643;-webkit-text-stroke:1.41px #58a643;"><span style="letter-spacing:-0.661px;">44.8%</span></div>
<div class="t" id="s_cores" style="left:1891.58px;top:433.46px;font-size:31.36px;color:#ccccdc;-webkit-text-stroke:1.20px #ccccdc;"><span style="letter-spacing:0.000px;">2</span></div>
<div class="t" id="s_up" style="left:2133.65px;top:432.96px;font-size:31.36px;color:#ccccdc;-webkit-text-stroke:1.20px #ccccdc;"><span style="letter-spacing:0.857px;">53.5</span><span style="letter-spacing:0.857px;font-size:27.13px;"> </span><span style="letter-spacing:0.930px;font-size:27.13px;">mins</span></div>
<div class="t" id="s_rt" style="left:1864.65px;top:584.46px;font-size:31.36px;color:#ccccdc;-webkit-text-stroke:1.20px #ccccdc;"><span style="letter-spacing:0.657px;">5</span><span style="letter-spacing:0.657px;font-size:27.13px;"> </span><span style="letter-spacing:-0.070px;font-size:27.13px;">GiB</span></div>
<div class="t" id="s_rat" style="left:2064.82px;top:584.46px;font-size:31.36px;color:#ccccdc;-webkit-text-stroke:1.20px #ccccdc;"><span style="letter-spacing:0.567px;">2</span><span style="letter-spacing:0.567px;font-size:27.13px;"> </span><span style="letter-spacing:-0.070px;font-size:27.13px;">GiB</span></div>
<div class="t" id="s_swt" style="left:2278.68px;top:584.46px;font-size:31.36px;color:#ccccdc;-webkit-text-stroke:1.20px #ccccdc;"><span style="letter-spacing:0.211px;">0</span><span style="letter-spacing:0.211px;font-size:27.13px;"> B</span></div>
</div>
<script>(function(){var w=window.innerWidth||0;if(w>100&&Math.abs(w-2420)>4){document.body.style.zoom=String(w/2420);}})();</script>
</body></html>
